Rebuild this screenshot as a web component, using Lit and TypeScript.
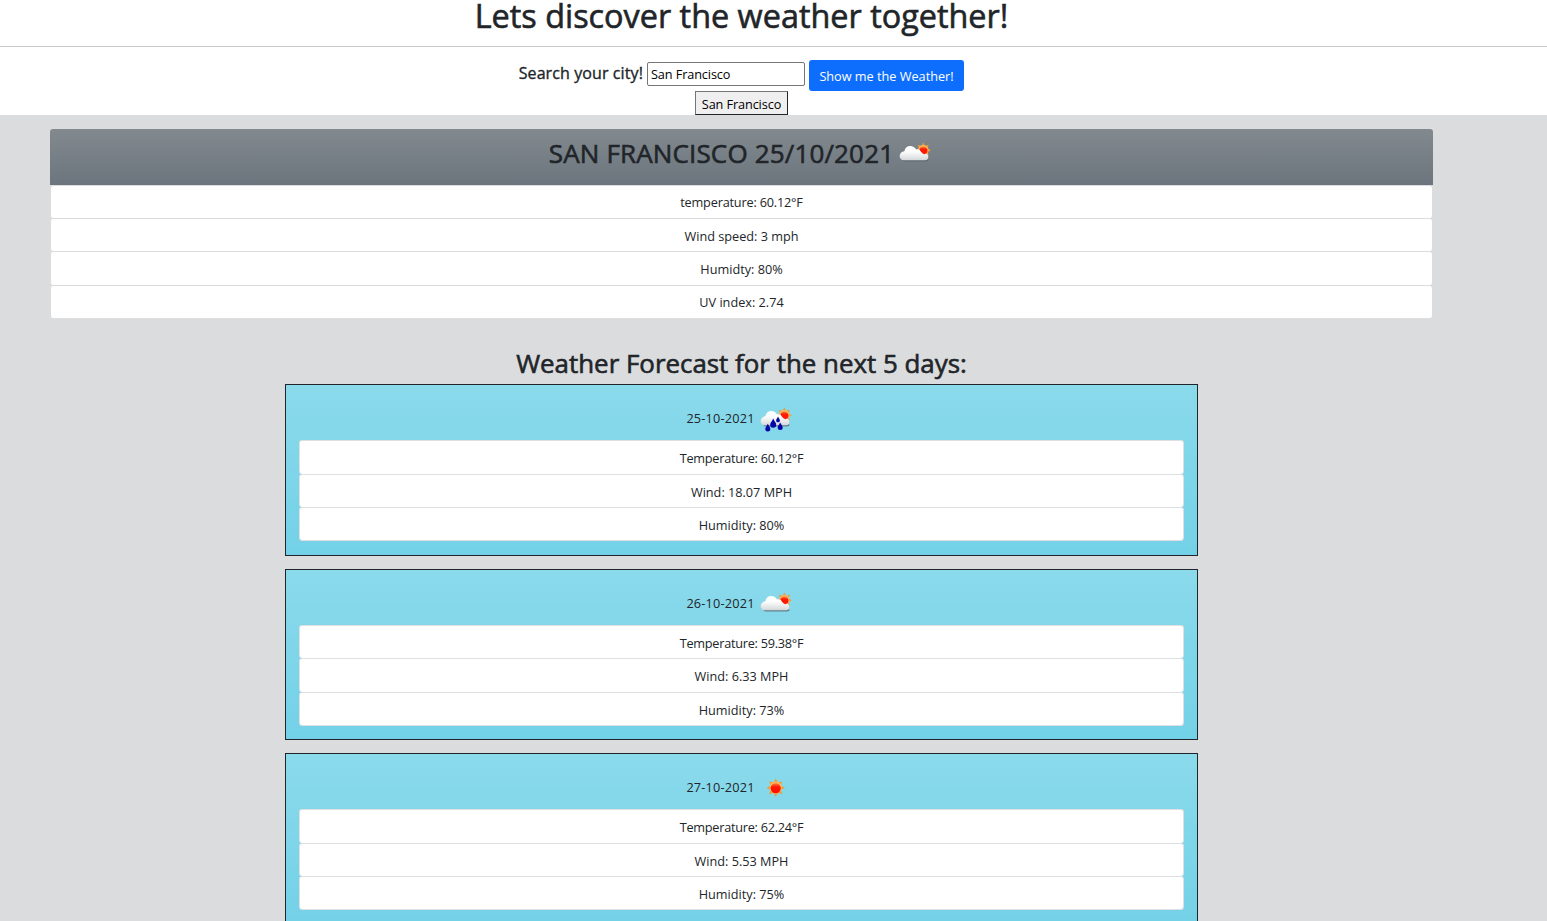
import { LitElement, html, css, svg } from "lit";
import { customElement, property } from "lit/decorators.js";

type Sky = "cloudy" | "rain" | "sunny";

const RAYS = [0, 45, 90, 135, 180, 225, 270, 315];

@customElement("weather-icon")
class WeatherIcon extends LitElement {
  @property() sky: Sky = "cloudy";

  static styles = css`
    :host { display: inline-block; width: 42px; height: 42px; }
    svg { display: block; width: 42px; height: 42px; }
  `;

  private sun(cx: number, cy: number, r: number) {
    return svg`
      <g transform="translate(${cx} ${cy})">
        ${RAYS.map(a => svg`<path transform="rotate(${a})" fill="#ee9c35" d=${`M${-r * 0.42} ${-r * 0.9}L0 ${-r * 1.7}L${r * 0.42} ${-r * 0.9}Z`} />`)}
        <circle r=${r * 1.15} fill="#fbb95c" />
        <circle r=${r * 0.93} cy=${r * 0.12} fill="url(#core)" />
      </g>`;
  }

  private cloud() {
    return svg`
      <path fill="#59636b" opacity="0.75" d="M8.5 26h24q2 0 2 1t-2.500 1.500h-21q-3 0-2.500-2.500z" />
      <path fill="url(#puff)" d="M9.800 27.200C7.200 27.200 5.700 25.600 5.700 23C5.700 20.400 7.600 18.900 10.300 18.300C11 15 13.400 13.100 16.200 13.100C18.900 13.100 21 14.400 22 16.500C25.400 15.700 27 17.800 28.200 19.600C32 19.800 34.300 21.200 34.300 23.800C34.300 26 33.300 27.200 31 27.200Z" />`;
  }

  private drop(x: number, y: number, s: number) {
    return svg`<path transform="translate(${x} ${y}) scale(${s})" fill="#0505a8" d="M0-4C1-1.500 2.500-.6 2.500 1.200A2.500 2.500 0 0 1-2.500 1.200C-2.500-.6-1-1.500 0-4Z" />`;
  }

  render() {
    return html`
      <svg viewBox="0 0 42 42" aria-hidden="true">
        <defs>
          <linearGradient id="core" x1="0" y1="0" x2="0" y2="1"><stop offset="0" stop-color="#ff7a3c" /><stop offset="0.35" stop-color="#ff1a05" /><stop offset="1" stop-color="#ff0d00" /></linearGradient>
          <linearGradient id="puff" x1="0" y1="0" x2="0" y2="1"><stop offset="0.35" stop-color="#fff" /><stop offset="1" stop-color="#d5d8da" /></linearGradient>
        </defs>
        ${this.sky === "sunny" ? this.sun(20.700, 20.700, 5.400) : ""}
        ${this.sky !== "sunny" ? svg`${this.sun(29.300, 17.200, 4.500)}${this.cloud()}<path fill="#ff1a05" d="M26 16.500Q29.500 14.900 32.500 17Q33 20.500 30.500 21.200Q28.500 21 27.500 19.300Q26 18 26 16.500Z" />` : ""}
        ${this.sky === "rain" ? svg`${this.drop(12.800, 29.700, 1)}${this.drop(18.200, 25.300, 1.200)}${this.drop(23, 21.500, .75)}${this.drop(25.200, 28.400, 1)}` : ""}
      </svg>`;
  }
}

interface Day { date: string; sky: Sky; rows: string[]; }

const CURRENT = ["temperature: 60.12°F", "Wind speed: 3 mph", "Humidty: 80%", "UV index: 2.74"];

const DAYS: Day[] = [
  { date: "25-10-2021", sky: "rain", rows: ["Temperature: 60.12°F", "Wind: 18.07 MPH", "Humidity: 80%"] },
  { date: "26-10-2021", sky: "cloudy", rows: ["Temperature: 59.38°F", "Wind: 6.33 MPH", "Humidity: 73%"] },
  { date: "27-10-2021", sky: "sunny", rows: ["Temperature: 62.24°F", "Wind: 5.53 MPH", "Humidity: 75%"] },
];

@customElement("app-root")
class AppRoot extends LitElement {
  static styles = css`
    :host {
      display: block;
      height: 921px;
      overflow: hidden;
      background: #fff;
      color: #212529;
      font: 400 12.7px/20px "Open Sans", "Noto Sans", sans-serif;
    }
    * { box-sizing: border-box; }
    h1, h2, h3, ul { margin: 0; padding: 0; font-weight: 400; }
    h1, h2, h3 { -webkit-text-stroke: 0.6px #212529; }
    .top { height: 115px; }
    .title {
      height: 46px;
      padding-right: 64px;
      text-align: center;
      font-size: 32.4px;
      line-height: 31px;
    }
    .rule { height: 1px; background: #c8c9ca; }
    .search {
      display: flex;
      justify-content: center;
      align-items: flex-start;
      padding: 13px 65px 0 0;
    }
    .label {
      width: 125px;
      margin: 3px 4px 0 0;
      font-size: 16px;
      line-height: 20px;
      letter-spacing: 0.1px;
      text-align: right;
      white-space: nowrap;
      -webkit-text-stroke: 0.35px #212529;
    }
    .field {
      width: 158px;
      height: 24px;
      margin: 2px 4px 0 0;
      padding: 0 3px;
      border: 1px solid #767676;
      border-radius: 2px;
      font: inherit;
      letter-spacing: -0.1px;
      color: #000;
      background: #fff;
      outline: none;
    }
    .go {
      width: 155px;
      height: 31px;
      padding: 0;
      border: 0;
      border-radius: 3px;
      background: #0d6efd;
      color: #fff;
      font: inherit;
      white-space: nowrap;
    }
    .history { display: flex; justify-content: center; padding-right: 64px; }
    .past {
      width: 93px;
      height: 24px;
      padding: 2px 0 0;
      border: 1px solid #767676;
      border-right-color: #212529;
      border-bottom-color: #212529;
      background: #efefef;
      font: inherit;
      letter-spacing: -0.1px;
      color: #000;
      white-space: nowrap;
    }
    .body {
      display: flex;
      flex-direction: column;
      align-items: center;
      min-height: 1200px;
      padding: 14px 64px 0 0;
      background: #dbdcde;
    }
    .now { width: 1383px; }
    .banner {
      display: flex;
      justify-content: center;
      height: 55.800px;
      padding-left: 2px;
      border-radius: 3px 3px 0 0;
      background: linear-gradient(#828a8f, #6c757d);
    }
    .place { font-size: 26px; line-height: 49px; letter-spacing: 0.15px; white-space: nowrap; }
    .banner weather-icon { margin-top: 4px; }
    .list { list-style: none; border-bottom: 1px solid #dedfe0; border-radius: 3px; }
    .item {
      height: 33.3px;
      padding-top: 7px;
      border: 1px solid #dedfe0;
      border-bottom: 0;
      border-radius: 3px;
      background: #fff;
      text-align: center;
    }
    .item:first-child { letter-spacing: -0.25px; }
    .now .item { padding-top: 6.600px; border-color: #dbdcde; }
    .now .item:first-child { padding-top: 6px; letter-spacing: -0.18px; }
    .now .item:last-child { padding-top: 6px; }
    .heading { margin-top: 27px; height: 38.2px; font-size: 25.900px; line-height: 35px; }
    .day {
      width: 913px;
      height: 171.700px;
      margin-bottom: 12.800px;
      padding: 13px 13px 0;
      border: 1px solid #212529;
      background: linear-gradient(#8adaeb, #73d1e7);
    }
    .day .item { height: 33.4px; }
    .date {
      display: flex;
      justify-content: center;
      height: 42.1px;
      line-height: 40px;
      letter-spacing: 0.2px;
    }
  `;

  private list(rows: string[]) {
    return html`<ul class="list">${rows.map(r => html`<li class="item">${r}</li>`)}</ul>`;
  }

  render() {
    return html`
      <header class="top">
        <h1 class="title">Lets discover the weather together!</h1>
        <div class="rule"></div>
        <div class="search">
          <label class="label" for="city">Search your city!</label>
          <input class="field" id="city" value="San Francisco" />
          <button class="go">Show me the Weather!</button>
        </div>
        <div class="history"><button class="past">San Francisco</button></div>
      </header>
      <main class="body">
        <section class="now">
          <div class="banner">
            <h2 class="place">SAN FRANCISCO 25/10/2021</h2>
            <weather-icon sky="cloudy"></weather-icon>
          </div>
          ${this.list(CURRENT)}
        </section>
        <h3 class="heading">Weather Forecast for the next 5 days:</h3>
        ${DAYS.map(d => html`
          <article class="day">
            <div class="date"><span>${d.date}</span><weather-icon sky=${d.sky}></weather-icon></div>
            ${this.list(d.rows)}
          </article>`)}
      </main>`;
  }
}
